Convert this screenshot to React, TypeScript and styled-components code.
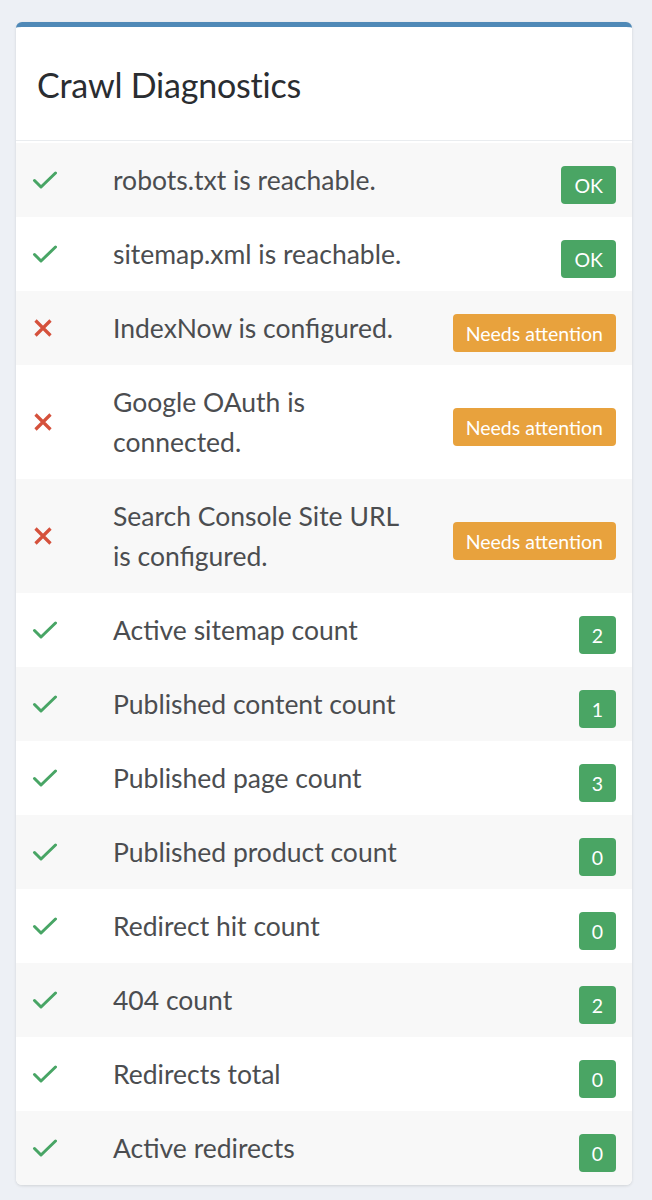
import React from "react";
import styled, { createGlobalStyle } from "styled-components";

const Global = createGlobalStyle`
  html, body { margin: 0; padding: 0; background: #edf0f5; }
  body { font-family: Lato, "Open Sans", "Liberation Sans", sans-serif; }
`;

const Page = styled.div`
  padding: 22px 20px 15px 16px;
`;

const Card = styled.section`
  background: #fff;
  border-top: 5px solid #4f89b7;
  border-radius: 6px;
  box-shadow: 0 1px 3px rgba(0, 0, 0, 0.12);
  overflow: hidden;
`;

const Header = styled.header`
  height: 114px;
  display: flex;
  align-items: center;
  padding: 2px 21px 0;
  border-bottom: 1px solid #e9ecef;
  box-sizing: border-box;
`;

const Title = styled.h2`
  margin: 0;
  font-size: 34px;
  font-weight: 400;
  color: #2a2d31;
  letter-spacing: -0.2px;
`;

const List = styled.div`
  display: flex;
  flex-direction: column;
  padding-top: 2px;
`;

const Row = styled.div<{ $striped: boolean }>`
  display: flex;
  align-items: center;
  padding: 17px 16px 17px 17px;
  background: ${(p) => (p.$striped ? "#f8f8f8" : "#ffffff")};
`;

const IconCell = styled.div`
  width: 80px;
  flex: 0 0 80px;
  display: flex;
  align-items: center;
`;

const Label = styled.div`
  flex: 1;
  font-size: 26.5px;
  line-height: 40px;
  color: #4b4d50;
`;

const Badge = styled.span<{ $tone: "ok" | "warn" }>`
  transform: translateY(5px);
  display: inline-flex;
  align-items: center;
  justify-content: center;
  height: 38px;
  min-width: 36px;
  padding: 0 13px;
  box-sizing: border-box;
  border-radius: 4px;
  font-size: 19.5px;
  color: #fff;
  background: ${(p) => (p.$tone === "ok" ? "#4aa564" : "#e8a23d")};
  white-space: nowrap;
`;

const Check = () => (
  <svg width="26" height="19" viewBox="0 0 26 19" style={{ marginLeft: -1 }}>
    <path d="M2.5 9.5 L9 16 L23.5 2" fill="none" stroke="#48a565" strokeWidth="3" strokeLinecap="round" strokeLinejoin="round" />
  </svg>
);

const Cross = () => (
  <svg width="20" height="20" viewBox="0 0 20 20" style={{ marginLeft: 0 }}>
    <path d="M2.5 2.5 L17.5 17.5 M17.5 2.5 L2.5 17.5" fill="none" stroke="#d5513c" strokeWidth="3.2" strokeLinecap="butt" />
  </svg>
);

type Item = { ok: boolean; lines: string[]; badge: string };

const items: Item[] = [
  { ok: true, lines: ["robots.txt is reachable."], badge: "OK" },
  { ok: true, lines: ["sitemap.xml is reachable."], badge: "OK" },
  { ok: false, lines: ["IndexNow is configured."], badge: "Needs attention" },
  { ok: false, lines: ["Google OAuth is", "connected."], badge: "Needs attention" },
  { ok: false, lines: ["Search Console Site URL", "is configured."], badge: "Needs attention" },
  { ok: true, lines: ["Active sitemap count"], badge: "2" },
  { ok: true, lines: ["Published content count"], badge: "1" },
  { ok: true, lines: ["Published page count"], badge: "3" },
  { ok: true, lines: ["Published product count"], badge: "0" },
  { ok: true, lines: ["Redirect hit count"], badge: "0" },
  { ok: true, lines: ["404 count"], badge: "2" },
  { ok: true, lines: ["Redirects total"], badge: "0" },
  { ok: true, lines: ["Active redirects"], badge: "0" },
];

export default function App() {
  return (
    <>
      <Global />
      <Page>
        <Card>
          <Header>
            <Title>Crawl Diagnostics</Title>
          </Header>
          <List>
            {items.map((it, i) => (
              <Row key={i} $striped={i % 2 === 0}>
                <IconCell>{it.ok ? <Check /> : <Cross />}</IconCell>
                <Label>
                  {it.lines.map((l, j) => (
                    <React.Fragment key={j}>
                      {j > 0 && <br />}
                      {l}
                    </React.Fragment>
                  ))}
                </Label>
                <Badge $tone={it.ok ? "ok" : "warn"}>{it.badge}</Badge>
              </Row>
            ))}
          </List>
        </Card>
      </Page>
    </>
  );
}
